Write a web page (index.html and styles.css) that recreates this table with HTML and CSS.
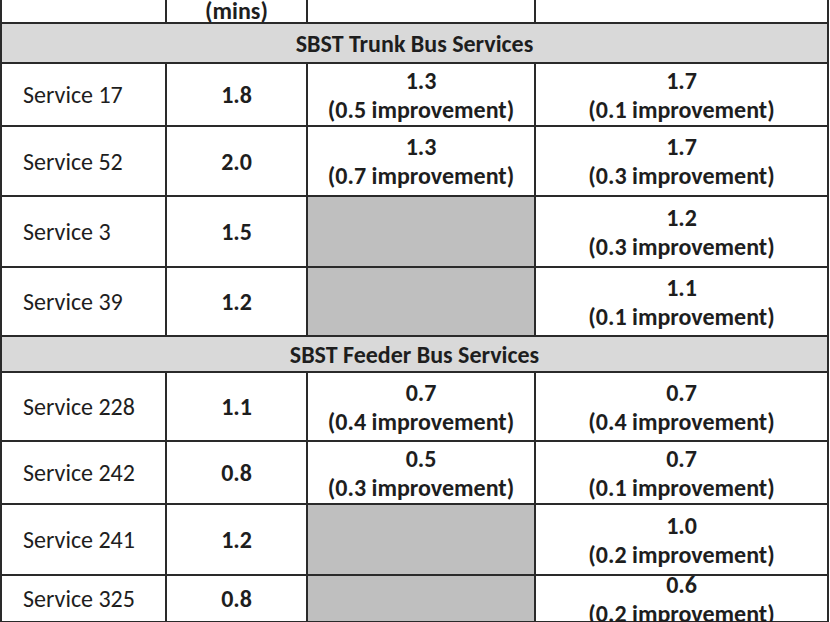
FILE: index.html
```html
<!DOCTYPE html>
<html>
<head>
<meta charset="utf-8">
<link rel="stylesheet" href="styles.css">
</head>
<body>
<table class="grid">
  <colgroup>
    <col class="c1"><col class="c2"><col class="c3"><col class="c4">
  </colgroup>
  <tr class="head">
    <td></td>
    <td class="num">(mins)</td>
    <td></td>
    <td></td>
  </tr>
  <tr class="section s1">
    <td colspan="4">SBST Trunk Bus Services</td>
  </tr>
  <tr class="h63">
    <td class="name">Service 17</td>
    <td class="num">1.8</td>
    <td class="num">1.3<br>(0.5 improvement)</td>
    <td class="num">1.7<br>(0.1 improvement)</td>
  </tr>
  <tr class="h70">
    <td class="name">Service 52</td>
    <td class="num">2.0</td>
    <td class="num">1.3<br>(0.7 improvement)</td>
    <td class="num">1.7<br>(0.3 improvement)</td>
  </tr>
  <tr class="h71">
    <td class="name">Service 3</td>
    <td class="num">1.5</td>
    <td class="blank"></td>
    <td class="num">1.2<br>(0.3 improvement)</td>
  </tr>
  <tr class="h69">
    <td class="name">Service 39</td>
    <td class="num">1.2</td>
    <td class="blank"></td>
    <td class="num">1.1<br>(0.1 improvement)</td>
  </tr>
  <tr class="section s2">
    <td colspan="4">SBST Feeder Bus Services</td>
  </tr>
  <tr class="h69">
    <td class="name">Service 228</td>
    <td class="num">1.1</td>
    <td class="num">0.7<br>(0.4 improvement)</td>
    <td class="num">0.7<br>(0.4 improvement)</td>
  </tr>
  <tr class="h63">
    <td class="name">Service 242</td>
    <td class="num">0.8</td>
    <td class="num">0.5<br>(0.3 improvement)</td>
    <td class="num">0.7<br>(0.1 improvement)</td>
  </tr>
  <tr class="h71">
    <td class="name">Service 241</td>
    <td class="num">1.2</td>
    <td class="blank"></td>
    <td class="num">1.0<br>(0.2 improvement)</td>
  </tr>
  <tr class="last">
    <td class="name"><div class="fit">Service 325</div></td>
    <td class="num"><div class="fit">0.8</div></td>
    <td class="blank"><div class="fit"></div></td>
    <td class="num"><div class="fit"><span>0.6</span><span>(0.2 improvement)</span></div></td>
  </tr>
</table>
</body>
</html>
```
FILE: styles.css
```css
html, body {
  margin: 0;
  padding: 0;
  background: #ffffff;
  overflow: hidden;
}

body {
  font-family: "Carlito", "Lato", "Liberation Sans", sans-serif;
  color: #1e1e1e;
  font-size: 24px;
}

.grid {
  border-collapse: collapse;
  table-layout: fixed;
  width: 829px;
  margin-left: 0;
}

.c1 { width: 165px; }
.c2 { width: 141px; }
.c3 { width: 228px; }
.c4 { width: 293px; }

.grid td {
  border: 2px solid #2a2a2a;
  padding: 0;
  line-height: 29px;
  vertical-align: middle;
}

.head td {
  border-top: none;
  height: 20px;
  vertical-align: bottom;
  line-height: 22px;
  padding-bottom: 0;
}

.section td {
  background: #d9d9d9;
  text-align: center;
  font-weight: 700;
}

.s1 td { height: 38px; }
.s2 td { height: 34px; }

.h63 td { height: 61px; }
.h69 td { height: 67px; }
.h70 td { height: 68px; }
.h71 td { height: 69px; }

.last td {
  height: 45px;
  vertical-align: top;
}

.fit {
  height: 45px;
  display: flex;
  flex-direction: column;
  justify-content: center;
}

.num .fit {
  align-items: center;
}

.name {
  text-align: left;
  padding-left: 21px !important;
}

.num {
  text-align: center;
  font-weight: 700;
}

.blank {
  background: #bfbfbf;
}
```
